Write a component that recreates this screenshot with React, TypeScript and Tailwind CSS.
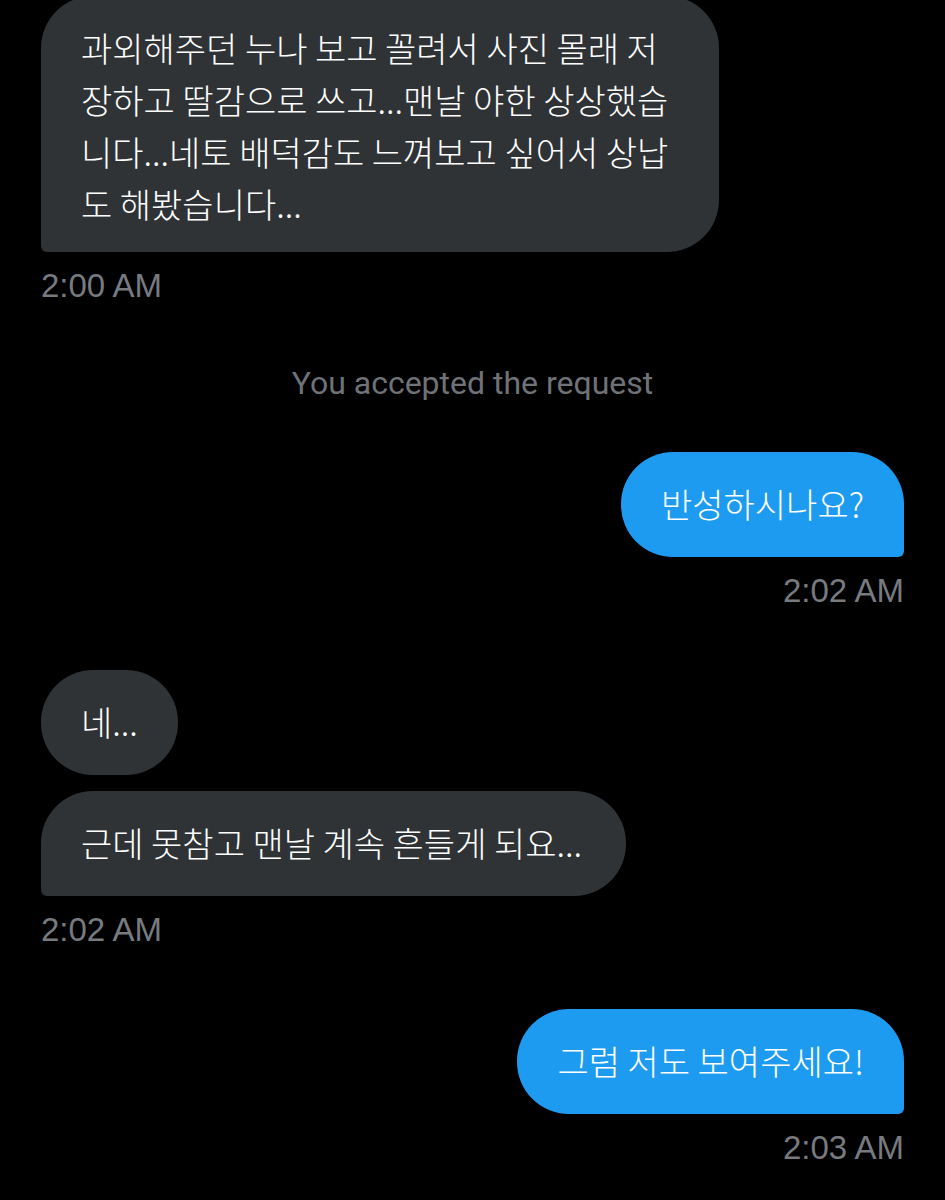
const bubbleFont = { fontFamily: '"Noto Sans CJK KR", "Noto Sans", sans-serif' };

const Time = ({ children, right }: { children: string; right?: boolean }) => (
  <div
    className={`h-[40px] leading-[40px] text-[33px] text-[#777b80] font-['Liberation_Sans',Arial,sans-serif] ${right ? "self-end" : "self-start"}`}
  >
    {children}
  </div>
);

export default function App() {
  return (
    <div className="min-h-[1200px] w-[945px] bg-black overflow-hidden px-[41px] flex flex-col" style={bubbleFont}>
      <div className="mt-[-4px] w-[678px] self-start bg-[#2f3336] text-white text-[34px] font-light leading-[52px] px-[40px] pt-[26px] pb-[22px] rounded-[52px] rounded-bl-[6px] whitespace-nowrap">
        과외해주던 누나 보고 꼴려서 사진 몰래 저<br />
        장하고 딸감으로 쓰고...맨날 야한 상상했습<br />
        니다...네토 배덕감도 느껴보고 싶어서 상납<br />
        도 해봤습니다...
      </div>
      <div className="mt-[14px]">
        <Time>2:00 AM</Time>
      </div>

      <div className="mt-[57px] h-[40px] leading-[40px] text-center text-[32px] text-[#6f7378] font-['Roboto',sans-serif]">
        You accepted the request
      </div>

      <div className="mt-[49px] self-end bg-[#1d9bf0] text-white text-[34px] font-light leading-[52px] px-[40px] pt-[26px] pb-[27px] rounded-[52px] rounded-br-[6px] whitespace-nowrap">
        반성하시나요?
      </div>
      <div className="mt-[14px] flex flex-col">
        <Time right>2:02 AM</Time>
      </div>

      <div className="mt-[59px] self-start bg-[#2f3336] text-white text-[34px] font-light leading-[52px] px-[40px] pt-[26px] pb-[27px] rounded-[52px] whitespace-nowrap">
        네...
      </div>
      <div className="mt-[16px] self-start bg-[#2f3336] text-white text-[34px] font-light leading-[52px] pl-[40px] pr-[44px] pt-[26px] pb-[27px] rounded-[52px] rounded-bl-[6px] whitespace-nowrap">
        근데 못참고 맨날 계속 흔들게 되요...
      </div>
      <div className="mt-[14px]">
        <Time>2:02 AM</Time>
      </div>

      <div className="mt-[59px] self-end bg-[#1d9bf0] text-white text-[34px] font-light leading-[52px] px-[40px] pt-[26px] pb-[27px] rounded-[52px] rounded-br-[6px] whitespace-nowrap">
        그럼 저도 보여주세요!
      </div>
      <div className="mt-[14px] flex flex-col">
        <Time right>2:03 AM</Time>
      </div>
    </div>
  );
}
